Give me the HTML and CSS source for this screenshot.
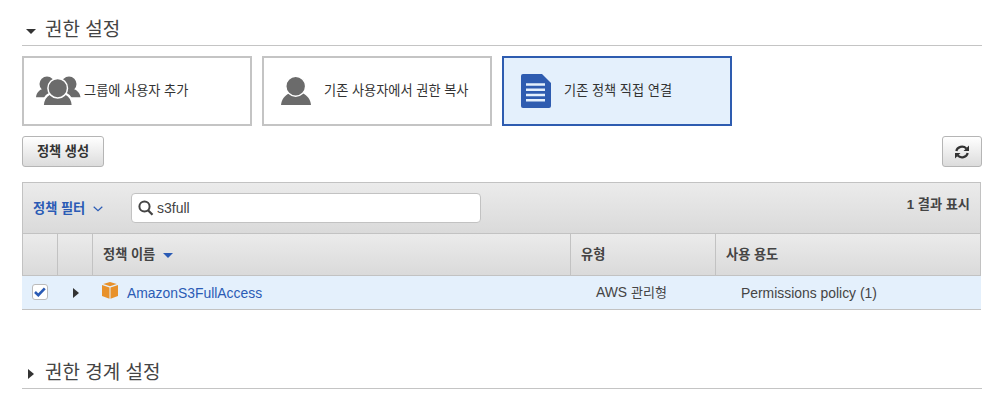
FILE: index.html
```html
<!DOCTYPE html>
<html lang="ko">
<head>
    <meta charset="UTF-8">
    <meta name="viewport" content="width=device-width, initial-scale=1.0">
    <title>권한 설정</title>
    <link rel="stylesheet" href="styles.css">
</head>
<body>
    <h2 class="section-title"><span class="arrow-down"></span><span class="title-text">권한 설정</span></h2>

    <!-- 권한 부여 방식 -->
    <div class="options">
        <div class="option">
            <svg class="icon-group" width="46" height="30" viewBox="0 0 46 30">
                <g fill="#6b6b6b">
                    <circle cx="12" cy="8" r="7.500"/>
                    <circle cx="34" cy="8" r="7.500"/>
                    <path d="M1 21.200C1.500 17 4 14 7.500 13L16 15 18 21.200zM45.500 21.200C45 17 42 14 38.500 13L30 15 28 21.200z"/>
                </g>
                <path d="M7.700 30C8 23 11 19.500 15 17.500L30.500 17.500C34.500 19.500 37.500 23 37.800 30z" fill="#6b6b6b" stroke="#fff" stroke-width="2"/>
                <circle cx="22.700" cy="12.200" r="9.800" fill="#6b6b6b" stroke="#fff" stroke-width="1.500"/>
            </svg>
            <span class="option-text">그룹에 사용자 추가</span>
        </div>
        <div class="option">
            <svg class="icon-user" width="30" height="28" viewBox="0 0 30 28">
                <path d="M0 28C.500 22 4 18.500 8 16.200L22 16.200C26 18.500 29.500 22 30 28z" fill="#6b6b6b"/>
                <circle cx="14.700" cy="9.300" r="9.900" fill="#6b6b6b" stroke="#fff" stroke-width="1.400"/>
            </svg>
            <span class="option-text">기존 사용자에서 권한 복사</span>
        </div>
        <div class="option selected">
            <svg class="icon-doc" width="30" height="34" viewBox="0 0 30 34">
                <path d="M2 0H21L30 9V32Q30 34 28 34H2Q0 34 0 32V2Q0 0 2 0z" fill="#2e5cb0"/>
                <path d="M5 10.500H24M5 15.800H24M5 21H24M5 26.300H24" stroke="#e4f0fc" stroke-width="2.400"/>
            </svg>
            <span class="option-text">기존 정책 직접 연결</span>
        </div>
    </div>

    <div class="actions">
        <button class="btn">정책 생성</button>
        <button class="btn btn-refresh">
            <svg width="16" height="16" viewBox="0 0 16 16">
                <path d="M2.300 7A5.800 5.300 0 0 1 12.300 4.500M13.700 9A5.800 5.300 0 0 1 3.700 11.500" fill="none" stroke="#333" stroke-width="2.200"/>
                <path d="M15 1.500V7H9.500zM1 14.500V9H6.500z" fill="#333"/>
            </svg>
        </button>
    </div>

    <!-- 정책 목록 -->
    <div class="toolbar">
        <a class="filter"><span>정책 필터</span>
            <svg width="10" height="6" viewBox="0 0 10 6"><path d="M.7.800L5 4.800 9.300.800" fill="none" stroke="#2a5bb5" stroke-width="1.200"/></svg>
        </a>
        <div class="search">
            <svg width="16" height="16" viewBox="0 0 16 16"><circle cx="6.500" cy="6.500" r="5.100" fill="none" stroke="#444" stroke-width="2"/><path d="M10 10.300L14.500 14.800" stroke="#444" stroke-width="2.300"/></svg>
            <input type="text" class="search-input" value="s3full">
        </div>
        <span class="count">1 결과 표시</span>
    </div>
    <table class="policies">
        <colgroup>
            <col class="col-check"><col class="col-expand"><col class="col-name"><col class="col-type"><col class="col-usage">
        </colgroup>
        <thead>
            <tr>
                <th></th>
                <th></th>
                <th>정책 이름<span class="sort"></span></th>
                <th>유형</th>
                <th>사용 용도</th>
            </tr>
        </thead>
        <tbody>
            <tr>
                <td class="check-cell">
                    <span class="checkbox">
                        <svg width="12" height="10" viewBox="0 0 12 10"><path d="M1 5L4.300 8.200 10.800 1.300" fill="none" stroke="#2a5bb5" stroke-width="2.600"/></svg>
                    </span>
                </td>
                <td class="expand-cell"><span class="arrow-right"></span></td>
                <td class="name-cell">
                    <div class="policy">
                        <svg width="16" height="17" viewBox="0 0 16 17">
                            <g fill="#e8912a">
                                <path d="M8 0L14.800 2 8 4.300 1.200 2z"/>
                                <path d="M0 3L7.500 5.400V16.800L0 14z"/>
                                <path d="M16 3L8.500 5.400V16.800L16 14z"/>
                            </g>
                        </svg>
                        <a>AmazonS3FullAccess</a>
                    </div>
                </td>
                <td>AWS <span class="ko">관리형</span></td>
                <td>Permissions policy (1)</td>
            </tr>
        </tbody>
    </table>

    <h2 class="section-title boundary"><span class="arrow-right"></span><span class="title-text">권한 경계 설정</span></h2>
</body>
</html>
```
FILE: styles.css
```css
* { box-sizing: border-box; }
body {
    margin: 0;
    padding: 11px 17px 0 22px;
    background: #fff;
    color: #444;
    font-family: "Liberation Sans", "Noto Sans CJK KR", sans-serif;
    font-size: 13.2px;
    overflow: hidden;
}

.section-title {
    display: flex;
    align-items: center;
    height: 35px;
    margin: 0;
    border-bottom: 1px solid #c4c4c4;
    font-size: 19px;
    font-weight: normal;
    line-height: 30px;
}
.title-text { padding-top: 3px; }
.arrow-down {
    width: 10px;
    margin: 6px 9px 0 4px;
    border: 5px solid transparent;
    border-top-color: #333;
    border-bottom: 0;
}
.arrow-right {
    display: inline-block;
    border: 5px solid transparent;
    border-left: 6px solid #333;
    border-right: 0;
}
.boundary { margin-top: 44px; }
.boundary .arrow-right { margin: 5px 11px 0 6px; }

/* 권한 부여 방식 */
.options {
    display: flex;
    gap: 10px;
    margin-top: 10px;
}
.option {
    display: flex;
    align-items: center;
    width: 230px;
    height: 70px;
    border: 2px solid #c4c4c4;
    color: #333;
}
.option-text { padding-bottom: 3px; }
.option.selected {
    border-color: #2e5cb0;
    background: #e4f0fc;
}
.icon-group { margin: 0 3px 0 11px; }
.icon-user { margin: 0 13px 0 17px; }
.icon-doc { margin: 0 13px 0 17px; }

.actions {
    display: flex;
    justify-content: space-between;
    width: 960px;
    margin-top: 10px;
}
.btn {
    display: flex;
    align-items: center;
    justify-content: center;
    width: 82px;
    height: 31px;
    padding: 0 0 2px;
    border: 1px solid #b5b5b5;
    border-radius: 3px;
    background: linear-gradient(#fff, #dcdcdc);
    color: #333;
    font-family: inherit;
    font-size: 13.2px;
    font-weight: bold;
}
.btn-refresh {
    width: 40px;
    padding: 0;
}

/* 검색 바 */
.toolbar {
    display: flex;
    align-items: center;
    width: 959px;
    height: 51px;
    margin-top: 15px;
    padding: 0 10px;
    border: 1px solid #c2c2c2;
    border-bottom: 0;
    background: linear-gradient(#ebebeb, #dadada);
}
.filter {
    display: flex;
    align-items: center;
    gap: 8px;
    width: 98px;
    color: #2a5bb5;
    font-weight: bold;
}
.filter span { padding-bottom: 2px; }
.filter svg { margin-top: 2px; }
.search {
    display: flex;
    align-items: center;
    gap: 3px;
    width: 350px;
    height: 30px;
    padding: 0 6px;
    border: 1px solid #c2c2c2;
    border-radius: 4px;
    background: #fff;
}
.search-input {
    flex: 1;
    padding: 0;
    border: none;
    outline: none;
    color: #444;
    font-family: inherit;
    font-size: 14px;
}
.count {
    margin: -10px 0 0 auto;
    font-weight: bold;
}

/* 정책 테이블 */
.policies {
    width: 959px;
    table-layout: fixed;
    border-collapse: separate;
    border-spacing: 0;
}
.col-check, .col-expand { width: 35px; }
.col-name { width: 478px; }
.col-type { width: 145px; }
.col-usage { width: 266px; }
.policies th {
    height: 43px;
    padding: 0 10px 2px;
    border: 1px solid #c2c2c2;
    border-right: 0;
    background: linear-gradient(#ebebeb, #dadada);
    text-align: left;
}
.policies th:last-child { border-right: 1px solid #c2c2c2; }
.policies td {
    height: 34px;
    padding: 0 0 0 26px;
    border-bottom: 1px solid #c2c2c2;
    background: #e4f0fc;
    font-size: 13.9px;
    line-height: 20px;
}
.policies td.check-cell { padding: 0 0 2px 10px; }
.policies td.expand-cell { padding-left: 16px; }
.policies td.name-cell { padding-left: 10px; }
.sort {
    display: inline-block;
    margin-left: 8px;
    border: 5px solid transparent;
    border-top-color: #2a5bb5;
    border-bottom: 0;
    vertical-align: 1px;
}
.checkbox {
    display: flex;
    align-items: center;
    justify-content: center;
    width: 16px;
    height: 16px;
    border: 1px solid #bbb;
    border-radius: 3px;
    background: #fff;
}
.policy {
    display: flex;
    gap: 9px;
    color: #2a5bb5;
}
.policy svg { margin-top: -1px; }
.ko { font-size: 13px; }
```
